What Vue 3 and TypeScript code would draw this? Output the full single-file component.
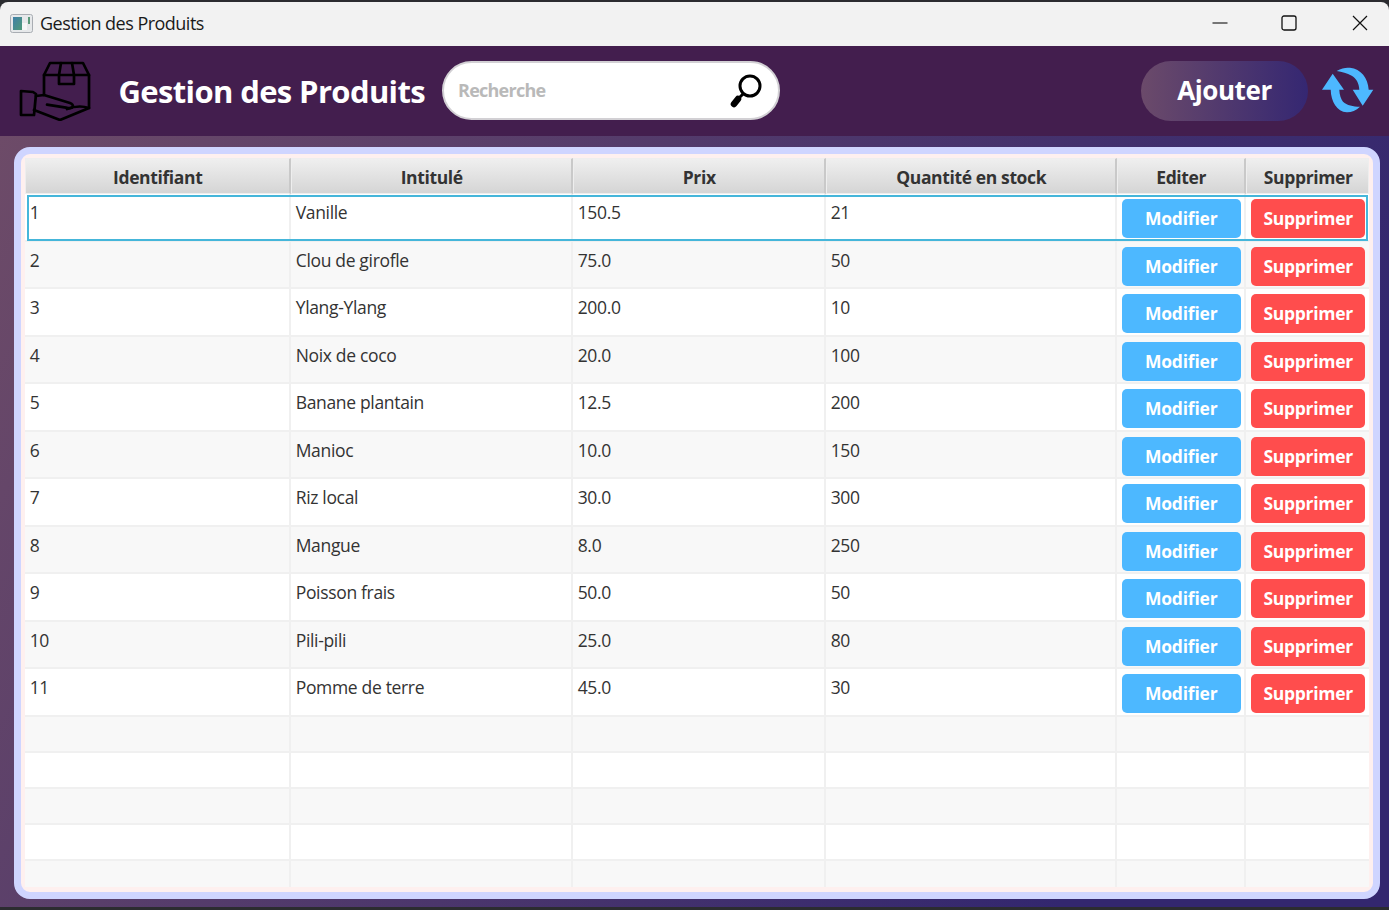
<script setup lang="ts">
interface Product { id: number; name: string; price: string; qty: number }
const products: Product[] = [
  { id: 1, name: 'Vanille', price: '150.5', qty: 21 },
  { id: 2, name: 'Clou de girofle', price: '75.0', qty: 50 },
  { id: 3, name: 'Ylang-Ylang', price: '200.0', qty: 10 },
  { id: 4, name: 'Noix de coco', price: '20.0', qty: 100 },
  { id: 5, name: 'Banane plantain', price: '12.5', qty: 200 },
  { id: 6, name: 'Manioc', price: '10.0', qty: 150 },
  { id: 7, name: 'Riz local', price: '30.0', qty: 300 },
  { id: 8, name: 'Mangue', price: '8.0', qty: 250 },
  { id: 9, name: 'Poisson frais', price: '50.0', qty: 50 },
  { id: 10, name: 'Pili-pili', price: '25.0', qty: 80 },
  { id: 11, name: 'Pomme de terre', price: '45.0', qty: 30 },
]
const headers = ['Identifiant', 'Intitulé', 'Prix', 'Quantité en stock', 'Editer', 'Supprimer']
</script>

<template>
  <div class="window">
    <div class="titlebar">
      <svg class="app-icon" width="24" height="20" viewBox="0 0 24 20">
        <rect x="0.5" y="0.5" width="22" height="18" rx="2" fill="#e6e8ea" stroke="#a9adb3" />
        <defs>
          <linearGradient id="ai" x1="0" y1="0" x2="1" y2="1">
            <stop offset="0" stop-color="#3f7fa8" />
            <stop offset="1" stop-color="#4f9a78" />
          </linearGradient>
        </defs>
        <rect x="3" y="3" width="9" height="13" fill="url(#ai)" />
        <rect x="12" y="9" width="5" height="7" fill="#f6f7f7" />
        <rect x="18" y="3" width="2" height="7" fill="#5c9a7a" />
      </svg>
      <span class="title-text">Gestion des Produits</span>
      <div class="controls">
        <svg width="16" height="16" viewBox="0 0 16 16"><path d="M0.5 8h15" stroke="#111" stroke-width="1.1" /></svg>
        <svg width="16" height="16" viewBox="0 0 16 16"><rect x="1" y="1" width="14" height="14" rx="2" fill="none" stroke="#111" stroke-width="1.3" /></svg>
        <svg class="close" width="16" height="16" viewBox="0 0 16 16"><path d="M1 1l14 14M15 1L1 15" stroke="#111" stroke-width="1.2" /></svg>
      </div>
    </div>

    <header class="header">
      <svg class="logo" width="72" height="60" viewBox="0 0 72 60" fill="none" stroke="#000" stroke-width="2.7" stroke-linejoin="round" stroke-linecap="round">
        <path d="M31 2h33l6 12H25z" />
        <path d="M42 2l-2 12v9h15v-9l-2-12" />
        <path d="M25 14v20M70 14v33" />
        <path d="M2 30l12 1 3 2-2 21H2z" />
        <path d="M17 35l8-1 26 8c5 2 3 6-2 5l-2-.3-19-3" />
        <path d="M15 49l26 10 29-12c-6-2-14-2-22 1" />
      </svg>
      <h1 class="heading">Gestion des Produits</h1>
      <label class="search">
        <input class="search-input" type="text" placeholder="Recherche" />
        <svg class="magnifier" width="34" height="36" viewBox="0 0 34 36" fill="none" stroke="#000">
          <circle cx="21" cy="13" r="10" stroke-width="3" />
          <path d="M14 21l-4 4" stroke-width="3" />
          <path d="M9 26l-4 5" stroke-width="6.5" stroke-linecap="round" />
        </svg>
      </label>
      <button class="add" type="button">Ajouter</button>
      <svg class="refresh" width="56" height="50" viewBox="0 0 56 50" fill="#4db8ff">
        <path d="M16.7 6C22 2.5 26 2.5 30 2.7C41 4 48 13 48.7 24.7H53.3L42.7 40.7L32.7 24.7H39.3C39 18 36 13 31.7 10.7C27 8 22 7 16.7 6Z" />
        <path d="M12.7 8.7L24 24.7H19.3C19.5 30 21 34 23 36.7C27 40.5 33 41.5 40 41.7C36 45.5 31 47.5 26.7 47.3C17 46.5 11 37 10.7 24.7H2Z" />
      </svg>
    </header>

    <main class="main">
      <section class="panel">
        <div class="table">
          <div class="row head">
            <div v-for="h in headers" :key="h" class="th">{{ h }}</div>
          </div>
          <div
            v-for="(p, i) in products"
            :key="p.id"
            class="row data"
            :class="{ selected: i === 0, alt: i % 2 === 1 }"
          >
            <div class="td">{{ p.id }}</div>
            <div class="td">{{ p.name }}</div>
            <div class="td">{{ p.price }}</div>
            <div class="td">{{ p.qty }}</div>
            <div class="td action"><button class="btn edit" type="button">Modifier</button></div>
            <div class="td action"><button class="btn del" type="button">Supprimer</button></div>
          </div>
          <div v-for="n in 5" :key="'e' + n" class="row empty" :class="{ alt: n % 2 === 1 }">
            <div v-for="c in 6" :key="c" class="td"></div>
          </div>
        </div>
      </section>
    </main>
  </div>
</template>

<style scoped>
.window {
  width: 1389px;
  height: 910px;
  display: flex;
  flex-direction: column;
  background: #2b2c30;
  padding: 2px 0 3px;
  box-sizing: border-box;
  overflow: hidden;
  font-family: "Open Sans", "Noto Sans", sans-serif;
}
.titlebar {
  height: 44px;
  flex: none;
  display: flex;
  align-items: center;
  background: #f2f2f2;
  border-radius: 8px 8px 0 0;
  padding-left: 10px;
}
.app-icon { margin-right: 6px; }
.title-text {
  font-size: 18px;
  letter-spacing: -0.52px;
  color: #1a1a1a;
  padding-bottom: 2px;
}
.controls {
  margin-left: auto;
  display: flex;
  gap: 53px;
  padding-right: 21px;
  transform: translateY(-1px);
}
.close { margin-left: 2px; }
.header {
  height: 90px;
  flex: none;
  display: flex;
  align-items: center;
  background: #431e4e;
  padding-left: 19px;
}
.logo { flex: none; }
.heading {
  margin: 0 0 0 27.5px;
  width: 323.5px;
  font-size: 31px;
  font-weight: 700;
  letter-spacing: -0.63px;
  color: #fff;
  white-space: nowrap;
}
.search {
  width: 338px;
  height: 59px;
  box-sizing: border-box;
  display: flex;
  align-items: center;
  background: #fff;
  border: 2px solid #d2d0d4;
  border-radius: 30px;
  padding: 0 15px 0 14px;
  margin-bottom: 1px;
}
.search-input {
  flex: 1;
  min-width: 0;
  border: 0;
  outline: 0;
  background: transparent;
  padding: 0 0 2px;
  font: 700 18px "Open Sans", "Noto Sans", sans-serif;
  letter-spacing: -0.75px;
}
.search-input::placeholder { color: #b9b9b9; opacity: 1; }
.magnifier { flex: none; margin-left: 1px; }
.add {
  margin-left: auto;
  width: 167px;
  height: 60px;
  border: 0;
  border-radius: 30px;
  background: linear-gradient(90deg, #6b4a6a, #352772);
  color: #fff;
  padding: 0 0 2px;
  font: 700 26px "Open Sans", "Noto Sans", sans-serif;
  letter-spacing: -0.4px;
}
.refresh {
  flex: none;
  margin: 0 13px 0 12px;
  transform: translateY(-1px);
}
.main {
  flex: 1;
  min-height: 0;
  padding: 11px 9px 8px 14px;
  background: linear-gradient(120deg, #6d4b68 0%, #33276f 82%);
}
.panel {
  height: 100%;
  box-sizing: border-box;
  border: 7px solid #cfd5ff;
  border-radius: 16px;
  background: #fef0ef;
  padding: 4px 4px 5px 3.7px;
  overflow: hidden;
}
.table {
  height: 100%;
  overflow: hidden;
  background: #f8f8f8;
}
.row {
  display: grid;
  grid-template-columns: 266px 282px 253px 291px 129px 123px;
  box-sizing: border-box;
  background: #fff;
  position: relative;
}
.row.alt { background: #f8f8f8; }
.head { height: 36px; background: #f2f2f2; }
.th {
  box-sizing: border-box;
  display: flex;
  align-items: center;
  justify-content: center;
  background: linear-gradient(#efefef, #d5d5d5);
  border: 1px solid #eeeeee;
  border-right: 2px solid #c9c9c9;
  padding: 1px 0 0 1px;
  font-size: 17.5px;
  font-weight: 700;
  letter-spacing: -0.37px;
  color: #333;
}
.th:last-child { border-right: 1px solid #eeeeee; padding-left: 2px; }
.data { height: 47.5px; }
.empty { height: 36px; }
.td {
  box-sizing: border-box;
  padding: 6px 0 0 5px;
  border-right: 2px solid #f0f0f0;
  border-bottom: 2px solid #f0f0f0;
  font-size: 17.5px;
  line-height: 24px;
  letter-spacing: -0.33px;
  color: #333;
}
.td:last-child { border-right: 0; }
.selected::after {
  content: "";
  position: absolute;
  inset: 1px 1px 1px 2px;
  border: 2px solid #45b6da;
  pointer-events: none;
}
.selected .btn { position: relative; z-index: 1; }
.action { padding: 5px 0 0 5px; }
.btn {
  display: block;
  height: 39px;
  border: 0;
  border-radius: 5px;
  padding: 0 0 1px;
  color: #fff;
  font: 700 17.5px "Open Sans", "Noto Sans", sans-serif;
  letter-spacing: -0.2px;
}
.edit { width: 119px; background: #4db8ff; }
.del { width: 114px; background: #ff4d4d; padding-left: 1px; letter-spacing: -0.3px; }
</style>
<style>
html, body { margin: 0; background: #2b2c30; }
</style>
